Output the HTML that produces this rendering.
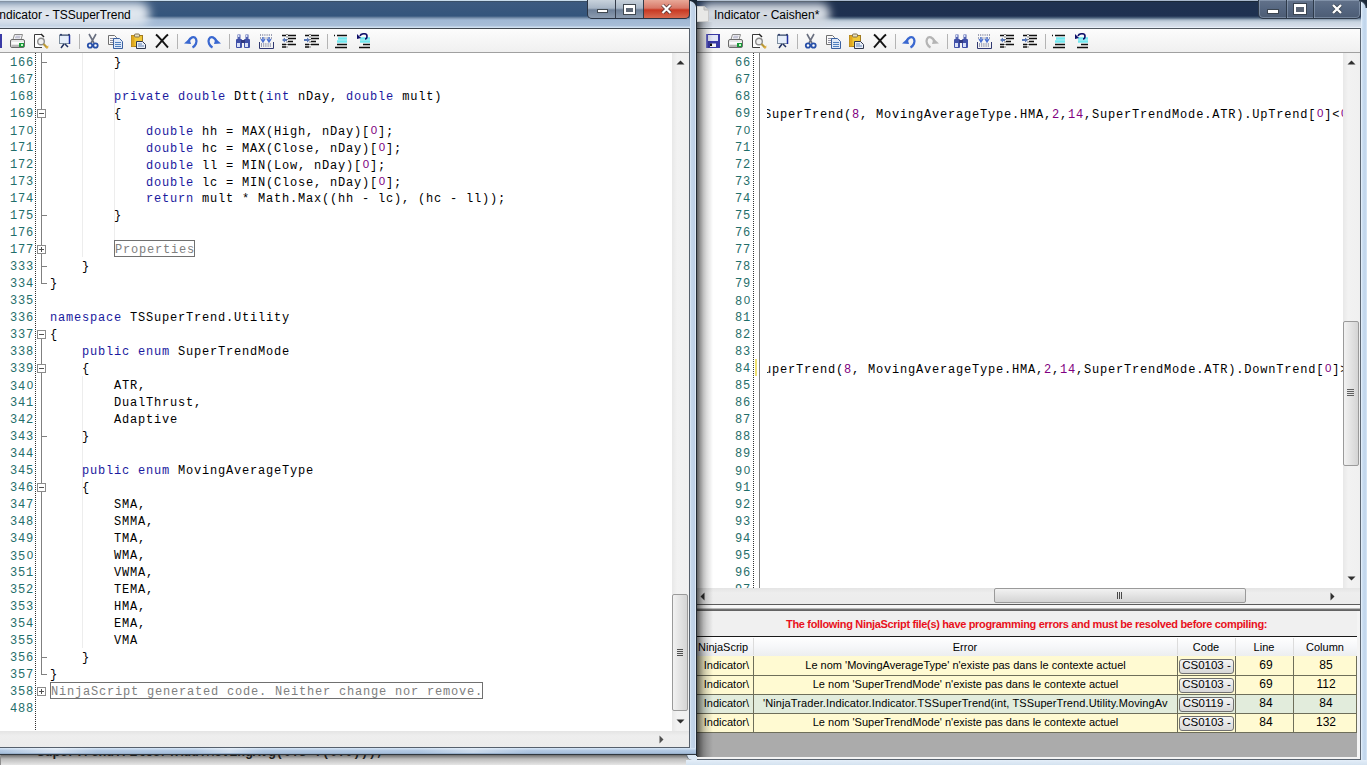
<!DOCTYPE html><html><head><meta charset="utf-8"><style>
*{box-sizing:border-box}
html,body{margin:0;padding:0}
body{width:1367px;height:765px;overflow:hidden;position:relative;background:#d8d8d8;font-family:"Liberation Sans",sans-serif}
.abs{position:absolute}
.mono{font-family:"Liberation Mono",monospace;font-size:12px;letter-spacing:0.8px;line-height:17px;padding-top:2px;white-space:pre}
.ln{color:#1f6e6a}
b.k{font-weight:normal;color:#1a1a9e}
b.n{font-weight:normal;color:#800080}
i.z{font-family:"Liberation Sans",sans-serif;font-style:normal;font-size:11.5px;letter-spacing:0;display:inline-block;width:8px;text-align:center;position:relative;top:-1.5px}
.ui{font-family:"Liberation Sans",sans-serif;font-size:11px;line-height:13px;white-space:pre;color:#000}
.hthumb{background:linear-gradient(#f4f4f4,#e0e0e0 50%,#d2d2d2);border:1px solid #989898;border-radius:2px}
.vthumb{background:linear-gradient(90deg,#f4f4f4,#e0e0e0 50%,#d2d2d2);border:1px solid #989898;border-radius:2px}
.btn{background:linear-gradient(#f6f6f6,#e6e6e6 50%,#d8d8d8);border:1px solid #707070;border-radius:3px}
</style></head><body>
<div class="abs" style="left:0px;top:754px;width:700px;height:11px;background:#f2f2f2"></div>
<div class="abs" style="left:0;top:754px;width:700px;height:11px;overflow:hidden"><div class="abs mono" style="left:37px;top:-12px;color:#000;font-weight:bold;font-size:13px;letter-spacing:-0.1px">SuperTrend.Filter.Add.MovingAvg(0.3*?(0.0)));</div></div>
<div class="abs" style="left:0px;top:754px;width:700px;height:11px;background:linear-gradient(rgba(40,40,40,.75),rgba(90,90,90,.35) 45%,rgba(160,160,160,.15))"></div>
<div class="abs" style="left:0px;top:754px;width:1px;height:11px;background:#909090"></div>
<div class="abs" style="left:697px;top:0px;width:670px;height:28px;background:linear-gradient(#a8b8cc 0,#a8b8cc 1px,#1a2838 1px,#1a2838 2px,#1f3250 2px,#1e3050 16px,#506680 18px,#a8b8c8 20px,#c8d4e0 22px,#d8e0ec 27px,#e8f0f8 27px)"></div>
<div class="abs" style="left:700px;top:3px;width:130px;height:22px;background:#d4dae2;border-radius:10px;filter:blur(4px)"></div>
<svg class="abs" style="left:697px;top:6px" width="12" height="16" viewBox="0 0 12 16"><path d="M0,0.5 H7 L11.5,4 V15.5 H0 Z" fill="#e8e8e6" stroke="#c8c8c8"/><path d="M7,0.5 V4 H11.5" fill="#d0d0d0" stroke="#b8b8b8"/></svg>
<div class="abs" style="left:714px;top:8px;font-size:12px;line-height:14px;color:#000">Indicator - Caishen*</div>
<div class="abs" style="left:1258px;top:0;width:103px;height:19px;border:1px solid #2e3a4a;border-top:none;border-radius:0 0 5px 5px;background:linear-gradient(#62728a,#556680 50%,#4c5c74);box-shadow:inset 0 0 0 1px rgba(190,205,225,.35);overflow:hidden"><div class="abs" style="left:27px;top:0;width:1px;height:18px;background:#2e3a4a;box-shadow:1px 0 0 rgba(190,205,225,.35)"></div><div class="abs" style="left:54px;top:0;width:1px;height:18px;background:#2e3a4a;box-shadow:1px 0 0 rgba(190,205,225,.35)"></div></div>
<div class="abs" style="left:1267px;top:9px;width:12px;height:5px;background:#fff;border:1px solid #3a4450"></div>
<div class="abs" style="left:1294px;top:4px;width:12px;height:10px;border:2px solid #fff;border-top-width:3px;outline:1px solid #3a4450;background:#5a6474"></div>
<svg class="abs" style="left:1331px;top:4px" width="12" height="10" viewBox="0 0 12 10"><path d="M2,1 L10,9 M10,1 L2,9" stroke="#3a4450" stroke-width="3.8"/><path d="M2,1 L10,9 M10,1 L2,9" stroke="#fff" stroke-width="2.4"/></svg>
<div class="abs" style="left:697px;top:28px;width:663px;height:1px;background:#505860"></div>
<div class="abs" style="left:697px;top:29px;width:663px;height:23px;background:linear-gradient(#fcfcfc,#f0f0f0)"></div>
<div class="abs" style="left:697px;top:52px;width:663px;height:1px;background:#a0a0a0"></div>
<svg class="abs" style="left:705px;top:33px" width="16" height="16" viewBox="0 0 16 16"><rect x="1" y="1" width="14" height="14" fill="#3a3aa6"/><rect x="1" y="1" width="1.5" height="14" fill="#7070d0"/>
<rect x="3" y="2" width="10" height="6" fill="#e4e8f8"/><rect x="5" y="10.5" width="6" height="3.5" fill="#f4f4f4"/><rect x="5" y="10.5" width="2" height="2.5" fill="#101010"/></svg>
<svg class="abs" style="left:727px;top:33px" width="16" height="16" viewBox="0 0 16 16"><path d="M5.5,1.5 L13.5,1.5 L12,6.5 L4,6.5 Z" fill="#f8f8f8" stroke="#8a8a8a"/>
<path d="M6.5,3.2 h5 M6,4.8 h5" stroke="#b0b0c8"/>
<path d="M1.5,8 Q1.5,6.5 3,6.5 H14 Q15.5,6.5 15.5,8 V13 Q15.5,14.5 14,14.5 H3 Q1.5,14.5 1.5,13 Z" fill="#e6e6e6" stroke="#6a6a6a"/>
<rect x="2.5" y="9" width="12" height="2" fill="#fafafa"/><rect x="2.5" y="12" width="12" height="2" fill="#b8b8b8"/>
<rect x="10" y="10" width="5" height="4" fill="#189838"/><rect x="12" y="11" width="2" height="2" fill="#c8f8c8"/></svg>
<svg class="abs" style="left:751px;top:33px" width="16" height="16" viewBox="0 0 16 16"><path d="M1.5,1.5 H8 M1.5,1.5 V14.5 H9" fill="none" stroke="#3a3a3a"/><rect x="2" y="2" width="8" height="12" fill="#fdfdfd"/>
<path d="M8,1 L11,4" stroke="#202020" stroke-width="1.4"/>
<circle cx="8" cy="8.5" r="3.3" fill="#f0f0f0" stroke="#8c8c8c" stroke-width="1.4"/>
<path d="M10.5,11 L14.5,15" stroke="#b89838" stroke-width="2.2"/><path d="M12,14.5 L15.5,12.5 L15,15.5 Z" fill="#e0b040"/></svg>
<svg class="abs" style="left:774px;top:33px" width="16" height="16" viewBox="0 0 16 16"><rect x="3.5" y="2.5" width="10" height="8" fill="#e6eefa" stroke="#8090a0"/><path d="M13.5,2 v9" stroke="#2030a0" stroke-width="1.5"/>
<path d="M3.5,2 h10" stroke="#506080" stroke-width="1.2"/><circle cx="5" cy="1.6" r="0.9" fill="#203060"/><circle cx="13" cy="1.6" r="0.9" fill="#203060"/>
<path d="M8,11 L5,15 M9,11 L12,14" stroke="#203060" stroke-width="1.5"/></svg>
<div class="abs" style="left:797px;top:34px;width:1px;height:15px;background:#b4b4b4"></div>
<svg class="abs" style="left:802px;top:33px" width="16" height="16" viewBox="0 0 16 16"><path d="M5,1 L10,10 M12,1 L7,10" stroke="#6a7080" stroke-width="1.6"/>
<circle cx="6" cy="12.5" r="2.2" fill="#fff" stroke="#2850a8" stroke-width="1.8"/><circle cx="11.5" cy="12.5" r="2.2" fill="#fff" stroke="#2850a8" stroke-width="1.8"/></svg>
<svg class="abs" style="left:825px;top:33px" width="16" height="16" viewBox="0 0 16 16"><path d="M1.5,2.5 h6 l2,2 v7 h-8 z" fill="#fafafa" stroke="#707070"/><path d="M3,5.5 h4 M3,7.5 h5 M3,9.5 h5" stroke="#9090a0"/>
<path d="M6.5,5.5 h6 l3,3 v7 h-9 z" fill="#dfe9f8" stroke="#3a60a0"/><path d="M8,9.5 h6 M8,11.5 h6 M8,13.5 h6" stroke="#5080c0"/></svg>
<svg class="abs" style="left:848px;top:33px" width="16" height="16" viewBox="0 0 16 16"><rect x="1.5" y="2.5" width="11" height="11" fill="#f0c838" stroke="#a07a20"/><rect x="1.5" y="2.5" width="3" height="11" fill="#e0a820"/>
<rect x="4.5" y="1" width="5" height="3" rx="1" fill="#e8e0c0" stroke="#807050"/>
<path d="M6.5,8.5 h6 l3,3 v4 h-9 z" fill="#e8eef8" stroke="#303850"/><path d="M8,11 h4 M8,13 h6" stroke="#6080b0"/></svg>
<svg class="abs" style="left:872px;top:33px" width="16" height="16" viewBox="0 0 16 16"><path d="M2,1.5 C6,5 10,10 14,14.5 M14,1.5 C10,5 6,10 2,14.5" fill="none" stroke="#141414" stroke-width="1.9"/></svg>
<div class="abs" style="left:895px;top:34px;width:1px;height:15px;background:#b4b4b4"></div>
<svg class="abs" style="left:901px;top:33px" width="16" height="16" viewBox="0 0 16 16"><g><path d="M5.5,8.5 C7,4.5 11,2.5 13,6 C14.5,9 12.5,13 9.5,14.5" fill="none" stroke="#3a68d0" stroke-width="2.3"/><path d="M1,10.5 L6.5,5.5 L8,11 Z" fill="#3a68d0"/></g></svg>
<svg class="abs" style="left:924px;top:33px" width="16" height="16" viewBox="0 0 16 16"><g transform="translate(16,0) scale(-1,1)"><path d="M5.5,8.5 C7,4.5 11,2.5 13,6 C14.5,9 12.5,13 9.5,14.5" fill="none" stroke="#b4b4b4" stroke-width="2.3"/><path d="M1,10.5 L6.5,5.5 L8,11 Z" fill="#b4b4b4"/></g></svg>
<div class="abs" style="left:947px;top:34px;width:1px;height:15px;background:#b4b4b4"></div>
<svg class="abs" style="left:953px;top:33px" width="16" height="16" viewBox="0 0 16 16"><rect x="2.5" y="1.5" width="3" height="5" fill="#5060b0"/><rect x="10.5" y="1.5" width="3" height="5" fill="#5060b0"/>
<rect x="1" y="6" width="6" height="9" rx="1" fill="#4050a8"/><rect x="9" y="6" width="6" height="9" rx="1" fill="#4050a8"/>
<rect x="2" y="10" width="3" height="4" fill="#d8e0f8"/><rect x="10" y="10" width="3" height="4" fill="#d8e0f8"/><rect x="6" y="7" width="4" height="3" fill="#303880"/>
<rect x="3" y="2" width="1.5" height="2" fill="#d8e0f8"/><rect x="11" y="2" width="1.5" height="2" fill="#d8e0f8"/></svg>
<svg class="abs" style="left:976px;top:33px" width="16" height="16" viewBox="0 0 16 16"><path d="M1.5,9 v6.5 h14 v-6.5" fill="none" stroke="#303870" stroke-width="1"/>
<path d="M2,2 h13 M2,5 h13 M3,11 h11 M3,13 h11" stroke="#404870" stroke-dasharray="1 1.2"/>
<path d="M5,4 v4 M3,6 l2,3 l2,-3 M11,4 v4 M9,6 l2,3 l2,-3" stroke="#4a70d0" stroke-width="1.3" fill="none"/></svg>
<svg class="abs" style="left:999px;top:33px" width="16" height="16" viewBox="0 0 16 16"><path d="M1,2.5 h4 M7,2.5 h8 M7,5.5 h8 M7,8.5 h5 M1,11.5 h4 M7,11.5 h8 M1,14 h4" stroke="#101010" stroke-width="1.5"/>
<path d="M6,1 v15" stroke="#101010" stroke-dasharray="1 1.5"/><path d="M1,7 l3,-2.5 v5 z M3,6 h3 v2 h-3z" fill="#5878b8"/></svg>
<svg class="abs" style="left:1022px;top:33px" width="16" height="16" viewBox="0 0 16 16"><path d="M1,2.5 h4 M7,2.5 h8 M7,5.5 h8 M7,8.5 h5 M1,11.5 h4 M7,11.5 h8 M1,14 h4" stroke="#101010" stroke-width="1.5"/>
<path d="M6,1 v15" stroke="#101010" stroke-dasharray="1 1.5"/><path d="M6,7 l-3,-2.5 v5 z M0,6 h3 v2 h-3z" fill="#5878b8"/></svg>
<div class="abs" style="left:1045px;top:34px;width:1px;height:15px;background:#b4b4b4"></div>
<svg class="abs" style="left:1050px;top:33px" width="16" height="16" viewBox="0 0 16 16"><path d="M2,2.5 h1 M5,2.5 h10 M5,11.5 h10 M3,14.5 h12" stroke="#101010" stroke-width="1.5"/><path d="M6,5.5 h9 M5,8.5 h10" stroke="#70e8f0" stroke-width="2.5"/></svg>
<svg class="abs" style="left:1073px;top:33px" width="16" height="16" viewBox="0 0 16 16"><path d="M8,11.5 h7 M4,14.5 h11" stroke="#101010" stroke-width="1.5"/><path d="M5,5.5 h10 M5,8.5 h10" stroke="#70e8f0" stroke-width="2.5"/>
<path d="M5,3 C6,0 12,0 12,3 C12,5 11,6 10,6" fill="none" stroke="#10106a" stroke-width="1.6"/><path d="M2,1 L6,5 L2,6 Z" fill="#10106a"/></svg>
<div class="abs" style="left:697px;top:53px;width:646px;height:535px;background:#fff"></div>
<div class="abs" style="left:697px;top:53px;width:646px;height:535px;overflow:hidden">
<div class="abs mono ln" style="left:14px;top:0px;width:40px;text-align:right">66</div>
<div class="abs mono ln" style="left:14px;top:17px;width:40px;text-align:right">67</div>
<div class="abs mono ln" style="left:14px;top:34px;width:40px;text-align:right">68</div>
<div class="abs mono ln" style="left:14px;top:51px;width:40px;text-align:right">69</div>
<div class="abs mono ln" style="left:14px;top:68px;width:40px;text-align:right">7<i class="z">0</i></div>
<div class="abs mono ln" style="left:14px;top:85px;width:40px;text-align:right">71</div>
<div class="abs mono ln" style="left:14px;top:102px;width:40px;text-align:right">72</div>
<div class="abs mono ln" style="left:14px;top:119px;width:40px;text-align:right">73</div>
<div class="abs mono ln" style="left:14px;top:136px;width:40px;text-align:right">74</div>
<div class="abs mono ln" style="left:14px;top:153px;width:40px;text-align:right">75</div>
<div class="abs mono ln" style="left:14px;top:170px;width:40px;text-align:right">76</div>
<div class="abs mono ln" style="left:14px;top:187px;width:40px;text-align:right">77</div>
<div class="abs mono ln" style="left:14px;top:204px;width:40px;text-align:right">78</div>
<div class="abs mono ln" style="left:14px;top:221px;width:40px;text-align:right">79</div>
<div class="abs mono ln" style="left:14px;top:238px;width:40px;text-align:right">8<i class="z">0</i></div>
<div class="abs mono ln" style="left:14px;top:255px;width:40px;text-align:right">81</div>
<div class="abs mono ln" style="left:14px;top:272px;width:40px;text-align:right">82</div>
<div class="abs mono ln" style="left:14px;top:289px;width:40px;text-align:right">83</div>
<div class="abs mono ln" style="left:14px;top:306px;width:40px;text-align:right">84</div>
<div class="abs mono ln" style="left:14px;top:323px;width:40px;text-align:right">85</div>
<div class="abs mono ln" style="left:14px;top:340px;width:40px;text-align:right">86</div>
<div class="abs mono ln" style="left:14px;top:357px;width:40px;text-align:right">87</div>
<div class="abs mono ln" style="left:14px;top:374px;width:40px;text-align:right">88</div>
<div class="abs mono ln" style="left:14px;top:391px;width:40px;text-align:right">89</div>
<div class="abs mono ln" style="left:14px;top:408px;width:40px;text-align:right">9<i class="z">0</i></div>
<div class="abs mono ln" style="left:14px;top:425px;width:40px;text-align:right">91</div>
<div class="abs mono ln" style="left:14px;top:442px;width:40px;text-align:right">92</div>
<div class="abs mono ln" style="left:14px;top:459px;width:40px;text-align:right">93</div>
<div class="abs mono ln" style="left:14px;top:476px;width:40px;text-align:right">94</div>
<div class="abs mono ln" style="left:14px;top:493px;width:40px;text-align:right">95</div>
<div class="abs mono ln" style="left:14px;top:510px;width:40px;text-align:right">96</div>
<div class="abs mono ln" style="left:14px;top:527px;width:40px;text-align:right">97</div>
<div class="abs" style="left:56px;top:0px;width:1px;height:535px;background:repeating-linear-gradient(#303030 0,#303030 1px,transparent 1px,transparent 2px)"></div>
<div class="abs" style="left:62px;top:0px;width:1px;height:535px;background:#808080"></div>
<div class="abs" style="left:58px;top:306px;width:2px;height:17px;background:#f0e070"></div>
<div class="abs" style="left:70px;top:0;width:576px;height:535px;overflow:hidden">
<div class="abs mono" style="left:-3px;top:51px">SuperTrend(<b class="n">8</b>, MovingAverageType.HMA,<b class="n">2</b>,<b class="n">14</b>,SuperTrendMode.ATR).UpTrend[<b class="n"><i class="z">0</i></b>]&lt;<b class="n"><i class="z">0</i></b>)</div>
<div class="abs mono" style="left:-3px;top:306px">uperTrend(<b class="n">8</b>, MovingAverageType.HMA,<b class="n">2</b>,<b class="n">14</b>,SuperTrendMode.ATR).DownTrend[<b class="n"><i class="z">0</i></b>]&gt;<b class="n"><i class="z">0</i></b>)</div>
</div></div>
<div class="abs" style="left:1343px;top:53px;width:17px;height:535px;background:linear-gradient(90deg,#e8e8e8,#f2f2f2 30%,#f0f0f0)"></div>
<svg class="abs" style="left:1347px;top:60px" width="9" height="6"><path d="M0.5,4.5 L4.5,0.5 L8.5,4.5 Z" fill="#303030"/></svg>
<div class="abs" style="left:1343px;top:321px;width:16px;height:145px;background:linear-gradient(90deg,#f2f2f2,#e6e6e6 40%,#d4d4d4);border:1px solid #9a9a9a;border-radius:2px"></div>
<div class="abs" style="left:1347px;top:389px;width:7px;height:7px;background:repeating-linear-gradient(#606060 0,#606060 1px,transparent 1px,transparent 2px)"></div>
<svg class="abs" style="left:1347px;top:576px" width="9" height="6"><path d="M0.5,0.5 L4.5,4.5 L8.5,0.5 Z" fill="#303030"/></svg>
<div class="abs" style="left:697px;top:588px;width:663px;height:16px;background:linear-gradient(#e4e4e4,#eeeeee 30%,#ececec)"></div>
<svg class="abs" style="left:700px;top:592px" width="6" height="9"><path d="M4.5,0.5 L0.5,4.5 L4.5,8.5 Z" fill="#303030"/></svg>
<div class="abs" style="left:994px;top:588px;width:252px;height:15px;background:linear-gradient(#f2f2f2,#e6e6e6 40%,#d4d4d4);border:1px solid #9a9a9a;border-radius:2px"></div>
<div class="abs" style="left:1117px;top:592px;width:6px;height:7px;background:repeating-linear-gradient(90deg,#505050 0,#404040 1px,transparent 1px,transparent 2px)"></div>
<svg class="abs" style="left:1330px;top:592px" width="6" height="9"><path d="M0.5,0.5 L4.5,4.5 L0.5,8.5 Z" fill="#303030"/></svg>
<div class="abs" style="left:697px;top:604px;width:663px;height:7px;background:linear-gradient(#5c5c5c 0,#5c5c5c 1px,#f8f8f8 1px,#f8f8f8 4px,#7a7a7a 5px,#5c5c5c 7px)"></div>
<div class="abs" style="left:697px;top:611px;width:663px;height:25px;background:#f0f0f0"></div>
<div class="abs" style="left:786px;top:618px;font-size:11px;line-height:13px;font-weight:bold;color:#e81020;letter-spacing:-0.33px;white-space:pre">The following NinjaScript file(s) have programming errors and must be resolved before compiling:</div>
<div class="abs" style="left:697px;top:636px;width:660px;height:1px;background:#1a1a1a"></div>
<div class="abs" style="left:697px;top:637px;width:660px;height:19px;background:linear-gradient(#ffffff,#f6f7f9 50%,#eceef0)"></div>
<div class="abs" style="left:753px;top:638px;width:1px;height:17px;background:#dcdcdc"></div>
<div class="abs" style="left:1177px;top:638px;width:1px;height:17px;background:#dcdcdc"></div>
<div class="abs" style="left:1235px;top:638px;width:1px;height:17px;background:#dcdcdc"></div>
<div class="abs" style="left:1293px;top:638px;width:1px;height:17px;background:#dcdcdc"></div>
<div class="abs ui" style="left:698px;top:641px">NinjaScrip</div>
<div class="abs ui" style="left:753px;top:641px;width:424px;text-align:center">Error</div>
<div class="abs ui" style="left:1177px;top:641px;width:58px;text-align:center">Code</div>
<div class="abs ui" style="left:1235px;top:641px;width:58px;text-align:center">Line</div>
<div class="abs ui" style="left:1293px;top:641px;width:64px;text-align:center">Column</div>
<div class="abs" style="left:697px;top:656px;width:660px;height:20px;background:#fffad2"></div>
<div class="abs ui" style="left:697px;top:659px;width:52px;text-align:right">Indicator\</div>
<div class="abs ui" style="left:754px;top:659px;width:423px;text-align:center">Le nom &#x27;MovingAverageType&#x27; n&#x27;existe pas dans le contexte actuel</div>
<div class="abs btn" style="left:1179px;top:659px;width:55px;height:15px"></div>
<div class="abs ui" style="left:1179px;top:659px;width:55px;text-align:center;font-size:11.5px">CS0103 -</div>
<div class="abs ui" style="left:1237px;top:659px;width:58px;text-align:center;font-size:12px">69</div>
<div class="abs ui" style="left:1294px;top:659px;width:64px;text-align:center;font-size:12px">85</div>
<div class="abs" style="left:753px;top:656px;width:1px;height:20px;background:#6e6e5a"></div>
<div class="abs" style="left:1177px;top:656px;width:1px;height:20px;background:#6e6e5a"></div>
<div class="abs" style="left:1235px;top:656px;width:1px;height:20px;background:#6e6e5a"></div>
<div class="abs" style="left:1293px;top:656px;width:1px;height:20px;background:#6e6e5a"></div>
<div class="abs" style="left:1356px;top:656px;width:1px;height:20px;background:#6e6e5a"></div>
<div class="abs" style="left:697px;top:675px;width:660px;height:20px;background:#fffad2"></div>
<div class="abs ui" style="left:697px;top:678px;width:52px;text-align:right">Indicator\</div>
<div class="abs ui" style="left:754px;top:678px;width:423px;text-align:center">Le nom &#x27;SuperTrendMode&#x27; n&#x27;existe pas dans le contexte actuel</div>
<div class="abs btn" style="left:1179px;top:678px;width:55px;height:15px"></div>
<div class="abs ui" style="left:1179px;top:678px;width:55px;text-align:center;font-size:11.5px">CS0103 -</div>
<div class="abs ui" style="left:1237px;top:678px;width:58px;text-align:center;font-size:12px">69</div>
<div class="abs ui" style="left:1294px;top:678px;width:64px;text-align:center;font-size:12px">112</div>
<div class="abs" style="left:753px;top:675px;width:1px;height:20px;background:#6e6e5a"></div>
<div class="abs" style="left:1177px;top:675px;width:1px;height:20px;background:#6e6e5a"></div>
<div class="abs" style="left:1235px;top:675px;width:1px;height:20px;background:#6e6e5a"></div>
<div class="abs" style="left:1293px;top:675px;width:1px;height:20px;background:#6e6e5a"></div>
<div class="abs" style="left:1356px;top:675px;width:1px;height:20px;background:#6e6e5a"></div>
<div class="abs" style="left:697px;top:694px;width:660px;height:20px;background:#e2ecdc"></div>
<div class="abs ui" style="left:697px;top:697px;width:52px;text-align:right">Indicator\</div>
<div class="abs" style="left:754px;top:694px;width:414px;height:19px;overflow:hidden"><div class="abs ui" style="left:9px;top:3px;letter-spacing:0.11px">&#x27;NinjaTrader.Indicator.Indicator.TSSuperTrend(int, TSSuperTrend.Utility.MovingAverageType, int, int, TSSuperTrend.Utility.SuperTrendMode)&#x27;</div></div>
<div class="abs btn" style="left:1179px;top:697px;width:55px;height:15px"></div>
<div class="abs ui" style="left:1179px;top:697px;width:55px;text-align:center;font-size:11.5px">CS0119 -</div>
<div class="abs ui" style="left:1237px;top:697px;width:58px;text-align:center;font-size:12px">84</div>
<div class="abs ui" style="left:1294px;top:697px;width:64px;text-align:center;font-size:12px">84</div>
<div class="abs" style="left:753px;top:694px;width:1px;height:20px;background:#6e6e5a"></div>
<div class="abs" style="left:1177px;top:694px;width:1px;height:20px;background:#6e6e5a"></div>
<div class="abs" style="left:1235px;top:694px;width:1px;height:20px;background:#6e6e5a"></div>
<div class="abs" style="left:1293px;top:694px;width:1px;height:20px;background:#6e6e5a"></div>
<div class="abs" style="left:1356px;top:694px;width:1px;height:20px;background:#6e6e5a"></div>
<div class="abs" style="left:697px;top:713px;width:660px;height:20px;background:#fffad2"></div>
<div class="abs ui" style="left:697px;top:716px;width:52px;text-align:right">Indicator\</div>
<div class="abs ui" style="left:754px;top:716px;width:423px;text-align:center">Le nom &#x27;SuperTrendMode&#x27; n&#x27;existe pas dans le contexte actuel</div>
<div class="abs btn" style="left:1179px;top:716px;width:55px;height:15px"></div>
<div class="abs ui" style="left:1179px;top:716px;width:55px;text-align:center;font-size:11.5px">CS0103 -</div>
<div class="abs ui" style="left:1237px;top:716px;width:58px;text-align:center;font-size:12px">84</div>
<div class="abs ui" style="left:1294px;top:716px;width:64px;text-align:center;font-size:12px">132</div>
<div class="abs" style="left:753px;top:713px;width:1px;height:20px;background:#6e6e5a"></div>
<div class="abs" style="left:1177px;top:713px;width:1px;height:20px;background:#6e6e5a"></div>
<div class="abs" style="left:1235px;top:713px;width:1px;height:20px;background:#6e6e5a"></div>
<div class="abs" style="left:1293px;top:713px;width:1px;height:20px;background:#6e6e5a"></div>
<div class="abs" style="left:1356px;top:713px;width:1px;height:20px;background:#6e6e5a"></div>
<div class="abs" style="left:697px;top:675px;width:660px;height:1px;background:#6e6e5a"></div>
<div class="abs" style="left:697px;top:694px;width:660px;height:1px;background:#6e6e5a"></div>
<div class="abs" style="left:697px;top:713px;width:660px;height:1px;background:#6e6e5a"></div>
<div class="abs" style="left:697px;top:732px;width:660px;height:1px;background:#6e6e5a"></div>
<div class="abs" style="left:697px;top:733px;width:660px;height:24px;background:#ababab"></div>
<div class="abs" style="left:1357px;top:611px;width:3px;height:148px;background:#f4f4f4"></div>
<div class="abs" style="left:697px;top:757px;width:663px;height:2px;background:#f4f4f4"></div>
<div class="abs" style="left:1360px;top:28px;width:1px;height:732px;background:#5a6470"></div>
<div class="abs" style="left:697px;top:759px;width:664px;height:1px;background:#5a6470"></div>
<div class="abs" style="left:1361px;top:0px;width:6px;height:765px;background:linear-gradient(90deg,#e8f2fc,#c8dcf0 30%,#c0d4ea 70%,#d8e8f8)"></div>
<div class="abs" style="left:1359px;top:0px;width:8px;height:8px;background:radial-gradient(circle at 0 100%,transparent 6px,#3a4858 7px,#1a2838 8px)"></div>
<div class="abs" style="left:686px;top:760px;width:681px;height:5px;background:linear-gradient(#e4eef8,#d4e2f0)"></div>
<div class="abs" style="left:686px;top:754px;width:11px;height:6px;background:#dce8f4;border-left:1px solid #5a6470;border-bottom-left-radius:6px"></div>
<div class="abs" style="left:697px;top:22px;width:16px;height:735px;background:linear-gradient(90deg,rgba(0,0,0,.62),rgba(0,0,0,.42) 20%,rgba(0,0,0,.25) 40%,rgba(0,0,0,.14) 60%,rgba(0,0,0,.07) 80%,rgba(0,0,0,0))"></div>
<div class="abs" style="left:0px;top:0px;width:696px;height:28px;background:linear-gradient(#c8dcec 0,#c8dcec 1px,#3a5068 1px,#3a5068 2px,#3c5a80 2px,#34557c 16px,#7890ac 18px,#a0b8d4 20px,#a8bed8 26px,#d0e0f0 27px)"></div>
<div class="abs" style="left:-20px;top:2px;width:170px;height:24px;background:#dfe6ee;border-radius:12px;filter:blur(5px)"></div>
<div class="abs" style="left:-4px;top:8px;font-size:12px;line-height:14px;color:#000">Indicator - TSSuperTrend</div>
<div class="abs" style="left:587px;top:0;width:103px;height:19px;border:1px solid #2a3444;border-top:none;border-radius:0 0 5px 5px;overflow:hidden;background:#343c4a"><div class="abs" style="left:0;top:0;width:27px;height:18px;background:linear-gradient(#c8d2dc,#a8b6c6 45%,#6e8098 55%,#8c9cb0)"></div><div class="abs" style="left:28px;top:0;width:27px;height:18px;background:linear-gradient(#c8d2dc,#a8b6c6 45%,#6e8098 55%,#8c9cb0)"></div><div class="abs" style="left:56px;top:0;width:46px;height:18px;background:linear-gradient(#e8a898,#d87868 45%,#c83822 55%,#d86a50)"></div></div>
<div class="abs" style="left:597px;top:9px;width:11px;height:4px;background:#fff;border:1px solid #404850"></div>
<div class="abs" style="left:624px;top:5px;width:11px;height:9px;border:2px solid #fff;border-top-width:3px;outline:1px solid #404850;background:#606a78"></div>
<svg class="abs" style="left:661px;top:4px" width="11" height="10" viewBox="0 0 11 10"><path d="M1.5,1 L9.5,9 M9.5,1 L1.5,9" stroke="#503030" stroke-width="3.6"/><path d="M1.5,1 L9.5,9 M9.5,1 L1.5,9" stroke="#fff" stroke-width="2.2"/></svg>
<div class="abs" style="left:0px;top:28px;width:690px;height:1px;background:#404850"></div>
<div class="abs" style="left:0px;top:29px;width:689px;height:23px;background:linear-gradient(#fcfcfc,#f0f0f0)"></div>
<div class="abs" style="left:0px;top:52px;width:689px;height:1px;background:#a0a0a0"></div>
<svg class="abs" style="left:-13px;top:33px" width="16" height="16" viewBox="0 0 16 16"><rect x="1" y="1" width="14" height="14" fill="#3a3aa6"/><rect x="1" y="1" width="1.5" height="14" fill="#7070d0"/>
<rect x="3" y="2" width="10" height="6" fill="#e4e8f8"/><rect x="5" y="10.5" width="6" height="3.5" fill="#f4f4f4"/><rect x="5" y="10.5" width="2" height="2.5" fill="#101010"/></svg>
<svg class="abs" style="left:9px;top:33px" width="16" height="16" viewBox="0 0 16 16"><path d="M5.5,1.5 L13.5,1.5 L12,6.5 L4,6.5 Z" fill="#f8f8f8" stroke="#8a8a8a"/>
<path d="M6.5,3.2 h5 M6,4.8 h5" stroke="#b0b0c8"/>
<path d="M1.5,8 Q1.5,6.5 3,6.5 H14 Q15.5,6.5 15.5,8 V13 Q15.5,14.5 14,14.5 H3 Q1.5,14.5 1.5,13 Z" fill="#e6e6e6" stroke="#6a6a6a"/>
<rect x="2.5" y="9" width="12" height="2" fill="#fafafa"/><rect x="2.5" y="12" width="12" height="2" fill="#b8b8b8"/>
<rect x="10" y="10" width="5" height="4" fill="#189838"/><rect x="12" y="11" width="2" height="2" fill="#c8f8c8"/></svg>
<svg class="abs" style="left:33px;top:33px" width="16" height="16" viewBox="0 0 16 16"><path d="M1.5,1.5 H8 M1.5,1.5 V14.5 H9" fill="none" stroke="#3a3a3a"/><rect x="2" y="2" width="8" height="12" fill="#fdfdfd"/>
<path d="M8,1 L11,4" stroke="#202020" stroke-width="1.4"/>
<circle cx="8" cy="8.5" r="3.3" fill="#f0f0f0" stroke="#8c8c8c" stroke-width="1.4"/>
<path d="M10.5,11 L14.5,15" stroke="#b89838" stroke-width="2.2"/><path d="M12,14.5 L15.5,12.5 L15,15.5 Z" fill="#e0b040"/></svg>
<svg class="abs" style="left:56px;top:33px" width="16" height="16" viewBox="0 0 16 16"><rect x="3.5" y="2.5" width="10" height="8" fill="#e6eefa" stroke="#8090a0"/><path d="M13.5,2 v9" stroke="#2030a0" stroke-width="1.5"/>
<path d="M3.5,2 h10" stroke="#506080" stroke-width="1.2"/><circle cx="5" cy="1.6" r="0.9" fill="#203060"/><circle cx="13" cy="1.6" r="0.9" fill="#203060"/>
<path d="M8,11 L5,15 M9,11 L12,14" stroke="#203060" stroke-width="1.5"/></svg>
<div class="abs" style="left:79px;top:34px;width:1px;height:15px;background:#b4b4b4"></div>
<svg class="abs" style="left:84px;top:33px" width="16" height="16" viewBox="0 0 16 16"><path d="M5,1 L10,10 M12,1 L7,10" stroke="#6a7080" stroke-width="1.6"/>
<circle cx="6" cy="12.5" r="2.2" fill="#fff" stroke="#2850a8" stroke-width="1.8"/><circle cx="11.5" cy="12.5" r="2.2" fill="#fff" stroke="#2850a8" stroke-width="1.8"/></svg>
<svg class="abs" style="left:107px;top:33px" width="16" height="16" viewBox="0 0 16 16"><path d="M1.5,2.5 h6 l2,2 v7 h-8 z" fill="#fafafa" stroke="#707070"/><path d="M3,5.5 h4 M3,7.5 h5 M3,9.5 h5" stroke="#9090a0"/>
<path d="M6.5,5.5 h6 l3,3 v7 h-9 z" fill="#dfe9f8" stroke="#3a60a0"/><path d="M8,9.5 h6 M8,11.5 h6 M8,13.5 h6" stroke="#5080c0"/></svg>
<svg class="abs" style="left:130px;top:33px" width="16" height="16" viewBox="0 0 16 16"><rect x="1.5" y="2.5" width="11" height="11" fill="#f0c838" stroke="#a07a20"/><rect x="1.5" y="2.5" width="3" height="11" fill="#e0a820"/>
<rect x="4.5" y="1" width="5" height="3" rx="1" fill="#e8e0c0" stroke="#807050"/>
<path d="M6.5,8.5 h6 l3,3 v4 h-9 z" fill="#e8eef8" stroke="#303850"/><path d="M8,11 h4 M8,13 h6" stroke="#6080b0"/></svg>
<svg class="abs" style="left:154px;top:33px" width="16" height="16" viewBox="0 0 16 16"><path d="M2,1.5 C6,5 10,10 14,14.5 M14,1.5 C10,5 6,10 2,14.5" fill="none" stroke="#141414" stroke-width="1.9"/></svg>
<div class="abs" style="left:177px;top:34px;width:1px;height:15px;background:#b4b4b4"></div>
<svg class="abs" style="left:183px;top:33px" width="16" height="16" viewBox="0 0 16 16"><g><path d="M5.5,8.5 C7,4.5 11,2.5 13,6 C14.5,9 12.5,13 9.5,14.5" fill="none" stroke="#3a68d0" stroke-width="2.3"/><path d="M1,10.5 L6.5,5.5 L8,11 Z" fill="#3a68d0"/></g></svg>
<svg class="abs" style="left:206px;top:33px" width="16" height="16" viewBox="0 0 16 16"><g transform="translate(16,0) scale(-1,1)"><path d="M5.5,8.5 C7,4.5 11,2.5 13,6 C14.5,9 12.5,13 9.5,14.5" fill="none" stroke="#3a68d0" stroke-width="2.3"/><path d="M1,10.5 L6.5,5.5 L8,11 Z" fill="#3a68d0"/></g></svg>
<div class="abs" style="left:229px;top:34px;width:1px;height:15px;background:#b4b4b4"></div>
<svg class="abs" style="left:235px;top:33px" width="16" height="16" viewBox="0 0 16 16"><rect x="2.5" y="1.5" width="3" height="5" fill="#5060b0"/><rect x="10.5" y="1.5" width="3" height="5" fill="#5060b0"/>
<rect x="1" y="6" width="6" height="9" rx="1" fill="#4050a8"/><rect x="9" y="6" width="6" height="9" rx="1" fill="#4050a8"/>
<rect x="2" y="10" width="3" height="4" fill="#d8e0f8"/><rect x="10" y="10" width="3" height="4" fill="#d8e0f8"/><rect x="6" y="7" width="4" height="3" fill="#303880"/>
<rect x="3" y="2" width="1.5" height="2" fill="#d8e0f8"/><rect x="11" y="2" width="1.5" height="2" fill="#d8e0f8"/></svg>
<svg class="abs" style="left:258px;top:33px" width="16" height="16" viewBox="0 0 16 16"><path d="M1.5,9 v6.5 h14 v-6.5" fill="none" stroke="#303870" stroke-width="1"/>
<path d="M2,2 h13 M2,5 h13 M3,11 h11 M3,13 h11" stroke="#404870" stroke-dasharray="1 1.2"/>
<path d="M5,4 v4 M3,6 l2,3 l2,-3 M11,4 v4 M9,6 l2,3 l2,-3" stroke="#4a70d0" stroke-width="1.3" fill="none"/></svg>
<svg class="abs" style="left:281px;top:33px" width="16" height="16" viewBox="0 0 16 16"><path d="M1,2.5 h4 M7,2.5 h8 M7,5.5 h8 M7,8.5 h5 M1,11.5 h4 M7,11.5 h8 M1,14 h4" stroke="#101010" stroke-width="1.5"/>
<path d="M6,1 v15" stroke="#101010" stroke-dasharray="1 1.5"/><path d="M1,7 l3,-2.5 v5 z M3,6 h3 v2 h-3z" fill="#5878b8"/></svg>
<svg class="abs" style="left:304px;top:33px" width="16" height="16" viewBox="0 0 16 16"><path d="M1,2.5 h4 M7,2.5 h8 M7,5.5 h8 M7,8.5 h5 M1,11.5 h4 M7,11.5 h8 M1,14 h4" stroke="#101010" stroke-width="1.5"/>
<path d="M6,1 v15" stroke="#101010" stroke-dasharray="1 1.5"/><path d="M6,7 l-3,-2.5 v5 z M0,6 h3 v2 h-3z" fill="#5878b8"/></svg>
<div class="abs" style="left:327px;top:34px;width:1px;height:15px;background:#b4b4b4"></div>
<svg class="abs" style="left:332px;top:33px" width="16" height="16" viewBox="0 0 16 16"><path d="M2,2.5 h1 M5,2.5 h10 M5,11.5 h10 M3,14.5 h12" stroke="#101010" stroke-width="1.5"/><path d="M6,5.5 h9 M5,8.5 h10" stroke="#70e8f0" stroke-width="2.5"/></svg>
<svg class="abs" style="left:355px;top:33px" width="16" height="16" viewBox="0 0 16 16"><path d="M8,11.5 h7 M4,14.5 h11" stroke="#101010" stroke-width="1.5"/><path d="M5,5.5 h10 M5,8.5 h10" stroke="#70e8f0" stroke-width="2.5"/>
<path d="M5,3 C6,0 12,0 12,3 C12,5 11,6 10,6" fill="none" stroke="#10106a" stroke-width="1.6"/><path d="M2,1 L6,5 L2,6 Z" fill="#10106a"/></svg>
<div class="abs" style="left:0px;top:53px;width:672px;height:678px;background:#fff"></div>
<div class="abs" style="left:0;top:53px;width:672px;height:678px;overflow:hidden">
<div class="abs" style="left:35px;top:0px;width:1px;height:678px;background:repeating-linear-gradient(#303030 0,#303030 1px,transparent 1px,transparent 2px)"></div>
<div class="abs" style="left:82px;top:0px;width:1px;height:204px;background:#ededed"></div>
<div class="abs" style="left:82px;top:323px;width:1px;height:272px;background:#ededed"></div>
<div class="abs" style="left:114px;top:17px;width:1px;height:170px;background:#ededed"></div>
<div class="abs mono ln" style="left:10px;top:0px;width:24px;text-align:right">166</div>
<div class="abs" style="left:41px;top:0px;width:1px;height:17px;background:#808080"></div>
<div class="abs" style="left:42px;top:9px;width:5px;height:1px;background:#808080"></div>
<div class="abs mono" style="left:50px;top:0px">        }</div>
<div class="abs mono ln" style="left:10px;top:17px;width:24px;text-align:right">167</div>
<div class="abs" style="left:41px;top:17px;width:1px;height:17px;background:#808080"></div>
<div class="abs mono ln" style="left:10px;top:34px;width:24px;text-align:right">168</div>
<div class="abs" style="left:41px;top:34px;width:1px;height:17px;background:#808080"></div>
<div class="abs mono" style="left:50px;top:34px">        <b class="k">private</b> <b class="k">double</b> Dtt(<b class="k">int</b> nDay, <b class="k">double</b> mult)</div>
<div class="abs mono ln" style="left:10px;top:51px;width:24px;text-align:right">169</div>
<div class="abs" style="left:41px;top:51px;width:1px;height:17px;background:#808080"></div>
<div class="abs" style="left:37px;top:56px;width:9px;height:9px;border:1px solid #8c8c8c;background:#fff"></div>
<div class="abs" style="left:39px;top:60px;width:5px;height:1px;background:#505050"></div>
<div class="abs mono" style="left:50px;top:51px">        {</div>
<div class="abs mono ln" style="left:10px;top:68px;width:24px;text-align:right">17<i class="z">0</i></div>
<div class="abs" style="left:41px;top:68px;width:1px;height:17px;background:#808080"></div>
<div class="abs mono" style="left:50px;top:68px">            <b class="k">double</b> hh = MAX(High, nDay)[<b class="n"><i class="z">0</i></b>];</div>
<div class="abs mono ln" style="left:10px;top:85px;width:24px;text-align:right">171</div>
<div class="abs" style="left:41px;top:85px;width:1px;height:17px;background:#808080"></div>
<div class="abs mono" style="left:50px;top:85px">            <b class="k">double</b> hc = MAX(Close, nDay)[<b class="n"><i class="z">0</i></b>];</div>
<div class="abs mono ln" style="left:10px;top:102px;width:24px;text-align:right">172</div>
<div class="abs" style="left:41px;top:102px;width:1px;height:17px;background:#808080"></div>
<div class="abs mono" style="left:50px;top:102px">            <b class="k">double</b> ll = MIN(Low, nDay)[<b class="n"><i class="z">0</i></b>];</div>
<div class="abs mono ln" style="left:10px;top:119px;width:24px;text-align:right">173</div>
<div class="abs" style="left:41px;top:119px;width:1px;height:17px;background:#808080"></div>
<div class="abs mono" style="left:50px;top:119px">            <b class="k">double</b> lc = MIN(Close, nDay)[<b class="n"><i class="z">0</i></b>];</div>
<div class="abs mono ln" style="left:10px;top:136px;width:24px;text-align:right">174</div>
<div class="abs" style="left:41px;top:136px;width:1px;height:17px;background:#808080"></div>
<div class="abs mono" style="left:50px;top:136px">            <b class="k">return</b> mult * Math.Max((hh - lc), (hc - ll));</div>
<div class="abs mono ln" style="left:10px;top:153px;width:24px;text-align:right">175</div>
<div class="abs" style="left:41px;top:153px;width:1px;height:17px;background:#808080"></div>
<div class="abs" style="left:42px;top:162px;width:5px;height:1px;background:#808080"></div>
<div class="abs mono" style="left:50px;top:153px">        }</div>
<div class="abs mono ln" style="left:10px;top:170px;width:24px;text-align:right">176</div>
<div class="abs" style="left:41px;top:170px;width:1px;height:17px;background:#808080"></div>
<div class="abs mono ln" style="left:10px;top:187px;width:24px;text-align:right">177</div>
<div class="abs" style="left:41px;top:187px;width:1px;height:17px;background:#808080"></div>
<div class="abs" style="left:37px;top:192px;width:9px;height:9px;border:1px solid #8c8c8c;background:#fff"></div>
<div class="abs" style="left:39px;top:196px;width:5px;height:1px;background:#505050"></div>
<div class="abs" style="left:41px;top:194px;width:1px;height:5px;background:#505050"></div>
<div class="abs mono" style="left:114px;top:187px;width:81px;height:17px;border:1px solid #707070;color:#808080;line-height:15px">Properties</div>
<div class="abs mono ln" style="left:10px;top:204px;width:24px;text-align:right">333</div>
<div class="abs" style="left:41px;top:204px;width:1px;height:17px;background:#808080"></div>
<div class="abs" style="left:42px;top:213px;width:5px;height:1px;background:#808080"></div>
<div class="abs mono" style="left:50px;top:204px">    }</div>
<div class="abs mono ln" style="left:10px;top:221px;width:24px;text-align:right">334</div>
<div class="abs" style="left:41px;top:221px;width:1px;height:10px;background:#808080"></div>
<div class="abs" style="left:42px;top:230px;width:5px;height:1px;background:#808080"></div>
<div class="abs mono" style="left:50px;top:221px">}</div>
<div class="abs mono ln" style="left:10px;top:238px;width:24px;text-align:right">335</div>
<div class="abs mono ln" style="left:10px;top:255px;width:24px;text-align:right">336</div>
<div class="abs mono" style="left:50px;top:255px"><b class="k">namespace</b> TSSuperTrend.Utility</div>
<div class="abs mono ln" style="left:10px;top:272px;width:24px;text-align:right">337</div>
<div class="abs" style="left:41px;top:281px;width:1px;height:8px;background:#808080"></div>
<div class="abs" style="left:37px;top:277px;width:9px;height:9px;border:1px solid #8c8c8c;background:#fff"></div>
<div class="abs" style="left:39px;top:281px;width:5px;height:1px;background:#505050"></div>
<div class="abs mono" style="left:50px;top:272px">{</div>
<div class="abs mono ln" style="left:10px;top:289px;width:24px;text-align:right">338</div>
<div class="abs" style="left:41px;top:289px;width:1px;height:17px;background:#808080"></div>
<div class="abs mono" style="left:50px;top:289px">    <b class="k">public</b> <b class="k">enum</b> SuperTrendMode</div>
<div class="abs mono ln" style="left:10px;top:306px;width:24px;text-align:right">339</div>
<div class="abs" style="left:41px;top:306px;width:1px;height:17px;background:#808080"></div>
<div class="abs" style="left:37px;top:311px;width:9px;height:9px;border:1px solid #8c8c8c;background:#fff"></div>
<div class="abs" style="left:39px;top:315px;width:5px;height:1px;background:#505050"></div>
<div class="abs mono" style="left:50px;top:306px">    {</div>
<div class="abs mono ln" style="left:10px;top:323px;width:24px;text-align:right">34<i class="z">0</i></div>
<div class="abs" style="left:41px;top:323px;width:1px;height:17px;background:#808080"></div>
<div class="abs mono" style="left:50px;top:323px">        ATR,</div>
<div class="abs mono ln" style="left:10px;top:340px;width:24px;text-align:right">341</div>
<div class="abs" style="left:41px;top:340px;width:1px;height:17px;background:#808080"></div>
<div class="abs mono" style="left:50px;top:340px">        DualThrust,</div>
<div class="abs mono ln" style="left:10px;top:357px;width:24px;text-align:right">342</div>
<div class="abs" style="left:41px;top:357px;width:1px;height:17px;background:#808080"></div>
<div class="abs mono" style="left:50px;top:357px">        Adaptive</div>
<div class="abs mono ln" style="left:10px;top:374px;width:24px;text-align:right">343</div>
<div class="abs" style="left:41px;top:374px;width:1px;height:17px;background:#808080"></div>
<div class="abs" style="left:42px;top:383px;width:5px;height:1px;background:#808080"></div>
<div class="abs mono" style="left:50px;top:374px">    }</div>
<div class="abs mono ln" style="left:10px;top:391px;width:24px;text-align:right">344</div>
<div class="abs" style="left:41px;top:391px;width:1px;height:17px;background:#808080"></div>
<div class="abs mono ln" style="left:10px;top:408px;width:24px;text-align:right">345</div>
<div class="abs" style="left:41px;top:408px;width:1px;height:17px;background:#808080"></div>
<div class="abs mono" style="left:50px;top:408px">    <b class="k">public</b> <b class="k">enum</b> MovingAverageType</div>
<div class="abs mono ln" style="left:10px;top:425px;width:24px;text-align:right">346</div>
<div class="abs" style="left:41px;top:425px;width:1px;height:17px;background:#808080"></div>
<div class="abs" style="left:37px;top:430px;width:9px;height:9px;border:1px solid #8c8c8c;background:#fff"></div>
<div class="abs" style="left:39px;top:434px;width:5px;height:1px;background:#505050"></div>
<div class="abs mono" style="left:50px;top:425px">    {</div>
<div class="abs mono ln" style="left:10px;top:442px;width:24px;text-align:right">347</div>
<div class="abs" style="left:41px;top:442px;width:1px;height:17px;background:#808080"></div>
<div class="abs mono" style="left:50px;top:442px">        SMA,</div>
<div class="abs mono ln" style="left:10px;top:459px;width:24px;text-align:right">348</div>
<div class="abs" style="left:41px;top:459px;width:1px;height:17px;background:#808080"></div>
<div class="abs mono" style="left:50px;top:459px">        SMMA,</div>
<div class="abs mono ln" style="left:10px;top:476px;width:24px;text-align:right">349</div>
<div class="abs" style="left:41px;top:476px;width:1px;height:17px;background:#808080"></div>
<div class="abs mono" style="left:50px;top:476px">        TMA,</div>
<div class="abs mono ln" style="left:10px;top:493px;width:24px;text-align:right">35<i class="z">0</i></div>
<div class="abs" style="left:41px;top:493px;width:1px;height:17px;background:#808080"></div>
<div class="abs mono" style="left:50px;top:493px">        WMA,</div>
<div class="abs mono ln" style="left:10px;top:510px;width:24px;text-align:right">351</div>
<div class="abs" style="left:41px;top:510px;width:1px;height:17px;background:#808080"></div>
<div class="abs mono" style="left:50px;top:510px">        VWMA,</div>
<div class="abs mono ln" style="left:10px;top:527px;width:24px;text-align:right">352</div>
<div class="abs" style="left:41px;top:527px;width:1px;height:17px;background:#808080"></div>
<div class="abs mono" style="left:50px;top:527px">        TEMA,</div>
<div class="abs mono ln" style="left:10px;top:544px;width:24px;text-align:right">353</div>
<div class="abs" style="left:41px;top:544px;width:1px;height:17px;background:#808080"></div>
<div class="abs mono" style="left:50px;top:544px">        HMA,</div>
<div class="abs mono ln" style="left:10px;top:561px;width:24px;text-align:right">354</div>
<div class="abs" style="left:41px;top:561px;width:1px;height:17px;background:#808080"></div>
<div class="abs mono" style="left:50px;top:561px">        EMA,</div>
<div class="abs mono ln" style="left:10px;top:578px;width:24px;text-align:right">355</div>
<div class="abs" style="left:41px;top:578px;width:1px;height:17px;background:#808080"></div>
<div class="abs mono" style="left:50px;top:578px">        VMA</div>
<div class="abs mono ln" style="left:10px;top:595px;width:24px;text-align:right">356</div>
<div class="abs" style="left:41px;top:595px;width:1px;height:17px;background:#808080"></div>
<div class="abs" style="left:42px;top:604px;width:5px;height:1px;background:#808080"></div>
<div class="abs mono" style="left:50px;top:595px">    }</div>
<div class="abs mono ln" style="left:10px;top:612px;width:24px;text-align:right">357</div>
<div class="abs" style="left:41px;top:612px;width:1px;height:10px;background:#808080"></div>
<div class="abs" style="left:42px;top:621px;width:5px;height:1px;background:#808080"></div>
<div class="abs mono" style="left:50px;top:612px">}</div>
<div class="abs mono ln" style="left:10px;top:629px;width:24px;text-align:right">358</div>
<div class="abs" style="left:37px;top:634px;width:9px;height:9px;border:1px solid #8c8c8c;background:#fff"></div>
<div class="abs" style="left:39px;top:638px;width:5px;height:1px;background:#505050"></div>
<div class="abs" style="left:41px;top:636px;width:1px;height:5px;background:#505050"></div>
<div class="abs mono" style="left:50px;top:629px;width:433px;height:17px;border:1px solid #707070;color:#808080;line-height:15px">NinjaScript generated code. Neither change nor remove.</div>
<div class="abs mono ln" style="left:10px;top:646px;width:24px;text-align:right">488</div>
</div>
<div class="abs" style="left:672px;top:53px;width:17px;height:678px;background:linear-gradient(90deg,#e8e8e8,#f2f2f2 30%,#f0f0f0)"></div>
<svg class="abs" style="left:676px;top:60px" width="9" height="6"><path d="M0.5,4.5 L4.5,0.5 L8.5,4.5 Z" fill="#303030"/></svg>
<div class="abs" style="left:672px;top:594px;width:16px;height:117px;background:linear-gradient(90deg,#f2f2f2,#e6e6e6 40%,#d4d4d4);border:1px solid #9a9a9a;border-radius:2px"></div>
<div class="abs" style="left:677px;top:649px;width:6px;height:7px;background:repeating-linear-gradient(#606060 0,#404040 1px,transparent 1px,transparent 2px)"></div>
<svg class="abs" style="left:676px;top:719px" width="9" height="6"><path d="M0.5,0.5 L4.5,4.5 L8.5,0.5 Z" fill="#303030"/></svg>
<div class="abs" style="left:0px;top:731px;width:689px;height:16px;background:linear-gradient(#e4e4e4,#eeeeee 30%,#ececec)"></div>
<svg class="abs" style="left:659px;top:735px" width="6" height="9"><path d="M0.5,0.5 L4.5,4.5 L0.5,8.5 Z" fill="#505050"/></svg>
<div class="abs" style="left:689px;top:28px;width:1px;height:720px;background:#56606c"></div>
<div class="abs" style="left:0px;top:747px;width:690px;height:1px;background:#56606c"></div>
<div class="abs" style="left:690px;top:0px;width:6px;height:754px;background:linear-gradient(90deg,#e0ecf8,#c4d6ea 25%,#bed0e6 75%,#eef6fe)"></div>
<div class="abs" style="left:0px;top:748px;width:696px;height:6px;background:linear-gradient(#d8e8f8,#b4cae4 40%,#a8c0dc 80%,#90a8c4)"></div>
<div class="abs" style="left:0px;top:748px;width:696px;height:5px;background:linear-gradient(90deg,rgba(255,255,255,0) 0,rgba(255,255,255,.45) 8%,rgba(255,255,255,0) 14%,rgba(255,255,255,0) 28%,rgba(255,255,255,.4) 33%,rgba(255,255,255,0) 38%,rgba(255,255,255,0) 60%,rgba(255,255,255,.35) 68%,rgba(255,255,255,0) 76%)"></div>
<div class="abs" style="left:696px;top:0px;width:1px;height:756px;background:#202830"></div>
<div class="abs" style="left:0px;top:754px;width:696px;height:1px;background:#303840"></div>
<div class="abs" style="left:689px;top:0px;width:8px;height:8px;background:radial-gradient(circle at 0 100%,transparent 6.5px,#202830 7.5px,#1a2838 8px)"></div>
</body></html>
